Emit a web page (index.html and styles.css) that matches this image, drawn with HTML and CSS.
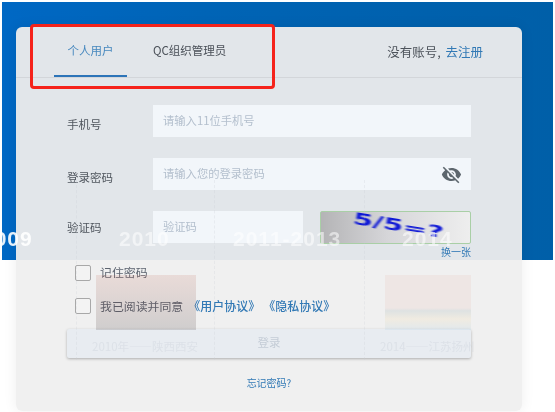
FILE: index.html
```html
<!DOCTYPE html>
<html lang="zh-CN">
<head>
  <meta charset="UTF-8" />
  <title>用户登录</title>
  <link rel="stylesheet" href="styles.css">
</head>
<body>

  <div class="stage">
    <div class="card">
      <div class="card-head">
        <div class="tabs">
          <div class="tab active">个人用户</div>
          <div class="tab">QC组织管理员</div>
        </div>
        <div class="signup">没有账号, <a class="link">去注册</a></div>
      </div>

      <div class="form">
        <div class="row">
          <label>手机号</label>
          <div class="input placeholder">请输入11位手机号</div>
        </div>
        <div class="row">
          <label>登录密码</label>
          <div class="input placeholder">
            请输入您的登录密码
            <svg class="eye" viewBox="0 0 24 24" width="21" height="21"><path d="M12 7c2.76 0 5 2.24 5 5 0 .65-.13 1.26-.36 1.83l2.92 2.92c1.51-1.26 2.7-2.89 3.43-4.75-1.73-4.39-6-7.5-11-7.5-1.4 0-2.74.25-3.98.7l2.16 2.16C10.74 7.13 11.35 7 12 7zM2 4.27l2.28 2.28.46.46C3.08 8.3 1.78 10.02 1 12c1.73 4.39 6 7.5 11 7.5 1.55 0 3.03-.3 4.38-.84l.42.42L19.73 22 21 20.73 3.27 3 2 4.27zM7.53 9.8l1.55 1.55c-.05.21-.08.43-.08.65 0 1.66 1.34 3 3 3 .22 0 .44-.03.65-.08l1.55 1.55c-.67.33-1.41.53-2.2.53-2.76 0-5-2.24-5-5 0-.79.2-1.53.53-2.2zm4.31-.78l3.15 3.15.02-.16c0-1.66-1.34-3-3-3l-.17.01z"/></svg>
          </div>
        </div>
        <div class="row">
          <label class="code-label">验证码</label>
          <div class="input placeholder code-input">验证码</div>
          <div class="captcha"><span>5/5=?</span></div>
        </div>
        <a class="link refresh">换一张</a>

        <div class="check-row first">
          <span class="box"></span>
          <span>记住密码</span>
        </div>
        <div class="check-row second">
          <span class="box"></span>
          <span>我已阅读并同意</span>
          <a class="link agree">《用户协议》</a>
          <a class="link agree">《隐私协议》</a>
        </div>

        <div class="login-btn">登录</div>
        <a class="link forgot">忘记密码?</a>
      </div>
    </div>

    <!-- 透出来的背景时间轴 -->
    <div class="ghost">
      <span class="year y1">2009</span>
      <span class="year y2">2010</span>
      <span class="year y3">2011-2013</span>
      <span class="year y4">2014</span>
      <div class="pic pic-a"></div>
      <div class="pic pic-b"></div>
      <span class="cap c1">2010年——陕西西安</span>
      <span class="cap c2">2014——江苏扬州</span>
      <i class="dash d1"></i>
      <i class="dash d2"></i>
      <i class="dash d3"></i>
    </div>

    <div class="mark"></div>
  </div>

</body>
</html>
```

FILE: styles.css
```css
html, body {
  margin: 0;
  padding: 0;
}
body {
  font-family: "Noto Sans CJK SC", "Noto Sans", sans-serif;
  background: #fff;
  color: #555b63;
}
.stage {
  position: relative;
  width: 555px;
  height: 412px;
  box-sizing: border-box;
  padding: 27px 33px 0 16px;
  overflow: hidden;
  filter: blur(.55px);
  background:
    linear-gradient(90deg, #0068c4 0, #0064b6 200px, #005fa8 555px) 2px 2px / 551px 258px no-repeat,
    #fff;
}
.card {
  position: relative;
  height: 384px;
  border-radius: 6px;
  box-shadow: 0 0 14px rgba(0, 0, 0, .07);
  background: linear-gradient(#e2e6ea 233px, #f0f0f0 233px);
}
.card-head {
  display: flex;
  justify-content: space-between;
  height: 50px;
  border-bottom: 1px solid #d3d6da;
  padding: 0 39px 0 38px;
}
.tabs {
  display: flex;
}
.tab {
  width: 73px;
  height: 48px;
  margin-right: 26px;
  font-size: 11.5px;
  line-height: 46px;
  text-align: center;
  white-space: nowrap;
  color: #4a5058;
}
.tab.active {
  height: 50px;
  box-sizing: border-box;
  border-bottom: 2px solid #2c74b8;
  color: #4587be;
}
.signup {
  font-size: 12.5px;
  word-spacing: 2px;
  line-height: 50px;
  color: #4c525a;
}
.link {
  color: #3279b5;
}
.form {
  display: flex;
  flex-direction: column;
  padding: 27px 51px 0;
}
.row {
  display: flex;
  align-items: center;
  height: 32px;
  margin-bottom: 21px;
}
.row label {
  width: 86px;
  flex: none;
  font-size: 11.5px;
  padding-top: 6px;
  color: #50565e;
}
.row .code-label {
  padding-top: 0;
  padding-bottom: 1px;
}
.input {
  flex: 1;
  height: 32px;
  display: flex;
  align-items: center;
  justify-content: space-between;
  box-sizing: border-box;
  padding: 0 10px 2px;
  background: #f2f6fa;
  font-size: 11.3px;
  color: #b3bfcd;
}
.eye {
  fill: #5d666d;
  margin: 2px -1px 0 0;
}
.code-input {
  flex: none;
  width: 150px;
  margin-right: 17px;
}
.captcha {
  flex: 1;
  height: 33px;
  box-sizing: border-box;
  border: 1px solid #a9cfa6;
  border-radius: 2px;
  display: flex;
  align-items: center;
  justify-content: center;
  background: linear-gradient(90deg, #b4b4b6, #d6d6d9 45%, #eeeeee);
}
.captcha span {
  margin: 0 0 4px 6px;
  font-family: "DejaVu Sans", sans-serif;
  font-size: 16px;
  font-weight: bold;
  color: #0d17d6;
  transform: rotate(9deg) scaleX(1.8);
  filter: blur(.7px);
}
.refresh {
  align-self: flex-end;
  margin-top: -19px;
  font-size: 10px;
  line-height: 14px;
}
.check-row {
  display: flex;
  align-items: center;
  margin: 5px 0 0 8px;
  height: 17px;
  font-size: 11.9px;
  color: #5d6470;
}
.check-row.first span:last-child {
  padding-bottom: 3px;
}
.check-row.second {
  margin-top: 16px;
}
.box {
  width: 16px;
  height: 16px;
  box-sizing: border-box;
  flex: none;
  margin-right: 9px;
  border: 1px solid #a8a8a8;
  border-radius: 2px;
  background: #f3f3f3;
}
.agree {
  font-size: 12px;
  font-weight: 500;
}
.agree:first-of-type {
  margin: 0 3px 0 5px;
}
.login-btn {
  height: 29px;
  margin-top: 15px;
  border-radius: 2px;
  background: #e8ecf1;
  box-shadow: 0 1px 3px rgba(0, 0, 0, .28);
  color: #c4ccd6;
  font-size: 11.5px;
  line-height: 27px;
  text-align: center;
}
.forgot {
  align-self: center;
  margin-top: 18px;
  font-size: 10px;
  line-height: 14px;
}

.ghost {
  position: absolute;
  inset: 0;
}
.year {
  position: absolute;
  top: 229px;
  font-family: "Liberation Sans", sans-serif;
  font-size: 21px;
  font-weight: bold;
  line-height: 20px;
  letter-spacing: 1px;
  color: rgba(255, 255, 255, .55);
}
.y1 { left: -18px; color: rgba(255, 255, 255, .9); }
.y2 { left: 119px; }
.y3 { left: 233px; }
.y4 { left: 402px; }
.pic {
  position: absolute;
  top: 275px;
  height: 55px;
}
.pic-a {
  left: 96px;
  width: 100px;
  background: linear-gradient(rgba(190, 90, 70, .14), rgba(60, 50, 50, .18));
}
.pic-b {
  left: 385px;
  width: 86px;
  background: linear-gradient(rgba(230, 190, 180, .2) 60%, rgba(150, 170, 170, .2) 65%, rgba(240, 220, 180, .25) 80%, rgba(190, 215, 230, .3));
}
.cap {
  position: absolute;
  top: 338px;
  font-size: 11.5px;
  line-height: 16px;
  color: rgba(190, 198, 208, .28);
}
.c1 { left: 92px; }
.c2 { left: 380px; }
.dash {
  position: absolute;
  top: 180px;
  height: 180px;
  border-left: 1px dashed rgba(200, 205, 212, .25);
}
.d1 { left: 76px; }
.d2 { left: 214px; }
.d3 { left: 364px; }
/* 标注红框 */
.mark {
  position: absolute;
  left: 30px;
  top: 24px;
  width: 245px;
  height: 65px;
  box-sizing: border-box;
  border: 3px solid #f5231b;
  border-radius: 4px;
}
```
